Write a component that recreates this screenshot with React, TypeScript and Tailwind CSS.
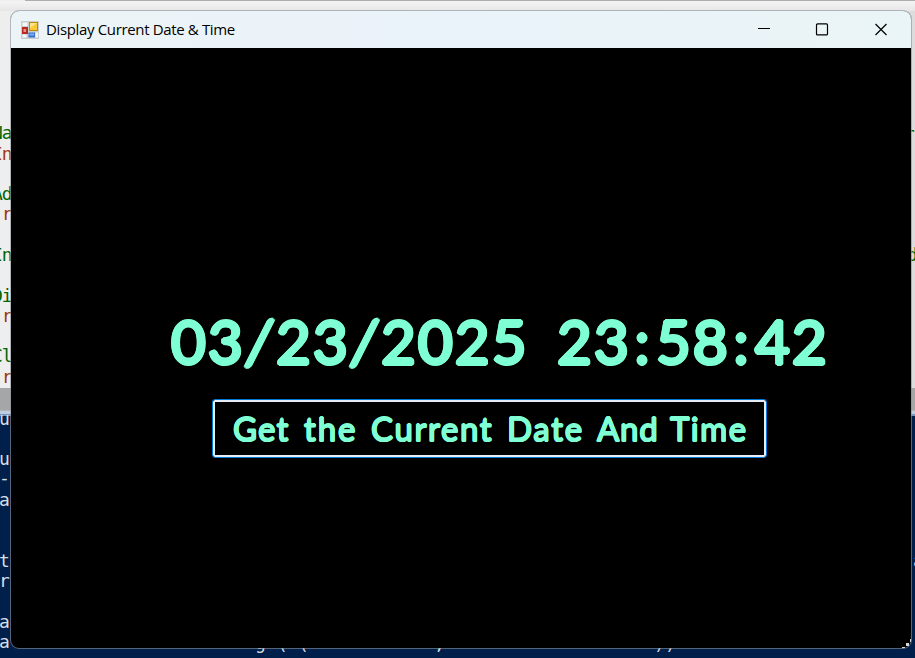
const glow = "[text-shadow:1.8px_0_#7fffd4,-1.8px_0_#7fffd4,0_1.8px_#7fffd4,0_-1.8px_#7fffd4,1.3px_1.3px_#7fffd4,-1.3px_1.3px_#7fffd4,1.3px_-1.3px_#7fffd4,-1.3px_-1.3px_#7fffd4]";
const glowSmall = "[text-shadow:0.7px_0_#7fffd4,-0.7px_0_#7fffd4,0_0.7px_#7fffd4,0_-0.7px_#7fffd4,0.5px_0.5px_#7fffd4,-0.5px_0.5px_#7fffd4,0.5px_-0.5px_#7fffd4,-0.5px_-0.5px_#7fffd4]";

const editorLines = [
  { t: "Na", c: "text-[#006400]", y: 123 },
  { t: "In", c: "text-[#a0360c]", y: 144 },
  { t: "Ad", c: "text-[#006400]", y: 184 },
  { t: " r", c: "text-[#a0360c]", y: 204 },
  { t: "In", c: "text-[#006400]", y: 245 },
  { t: "Di", c: "text-[#006400]", y: 286 },
  { t: " r", c: "text-[#a0360c]", y: 306 },
  { t: "Cl", c: "text-[#006400]", y: 346 },
  { t: " r", c: "text-[#a0360c]", y: 367 },
];
const consoleLines = [
  { t: "u", y: 409 }, { t: "u", y: 449 }, { t: "-", y: 468 }, { t: "a", y: 490 },
  { t: "t", y: 551 }, { t: "r", y: 571 }, { t: "a", y: 612 }, { t: "a", y: 632 },
];
const bottomPieces = [
  { t: "g", x: 255, y: 633 }, { t: "(", x: 277, y: 634 }, { t: "(", x: 298, y: 634 },
  { t: ",", x: 434, y: 634 }, { t: ")", x: 654, y: 634 }, { t: ")", x: 665, y: 634 },
];

function Backdrop() {
  return (
    <div className="absolute inset-0 flex flex-col overflow-hidden font-['DejaVu_Sans_Mono',monospace] text-[18px] leading-5">
      <div className="h-[388px] shrink-0 bg-linear-to-r from-[#eeeeee] via-[#f0f0f0] to-[#dcdcdc]">
        <div className="ml-[25px] h-px bg-[#adadad]" />
        <div className="h-[10px] bg-linear-to-b from-[#f4f4f4] to-[#e6e6e6]" />
      </div>
      <div className="h-[23px] shrink-0 border-b border-[#b3b3b3] bg-[#a6a6a6]" />
      <div className="h-[5px] shrink-0 border-b-2 border-[#7896bd] bg-[#bdcde0]" />
      <div className="grow bg-[#011f4b]" />
      {editorLines.map((l) => (
        <span key={l.y} className={`absolute -left-2 whitespace-pre tracking-[-1px] ${l.c}`} style={{ top: l.y }}>{l.t}</span>
      ))}
      {consoleLines.map((l) => (
        <span key={l.y} className="absolute -left-px text-[#d7dde2]" style={{ top: l.y }}>{l.t}</span>
      ))}
      {bottomPieces.map((l) => (
        <span key={l.x} className="absolute text-[#d7dde2]" style={{ left: l.x, top: l.y }}>{l.t}</span>
      ))}
      <span className="absolute left-[904px] top-[124px] text-[#006400]">r</span>
      <span className="absolute left-[907px] top-[245px] text-[#006400]">d</span>
      <span className="absolute left-[913px] top-[551px] text-[#b9dcea]">a</span>
    </div>
  );
}

function FormIcon() {
  return (
    <svg width="18" height="18" viewBox="0 0 18 18">
      <rect width="18" height="18" fill="#c8cdd0" />
      <rect x="1.5" y="1.5" width="5" height="3.5" fill="#f4f7f8" />
      <rect x="1.5" y="13.5" width="4" height="3" fill="#f4f7f8" />
      <rect x="14.5" y="11.5" width="2.5" height="5" fill="#f4f7f8" />
      <rect x="1" y="6" width="6" height="7" fill="#b52c25" />
      <rect x="2.5" y="8" width="2.5" height="3" fill="#ec9384" />
      <rect x="8" y="1" width="9" height="9" fill="#c18a06" />
      <rect x="9" y="2" width="7" height="7" fill="#fac936" />
      <path d="M9 2h7L9 7z" fill="#ffe388" />
      <rect x="7.5" y="11.5" width="6.5" height="5" fill="#3972d4" />
      <rect x="8.5" y="12.5" width="4.5" height="2" fill="#7dacf5" />
    </svg>
  );
}

function Slash() {
  return (
    <span className="flex w-[31px] justify-center">
      <span className="inline-block -skew-x-6">/</span>
    </span>
  );
}

export default function App() {
  return (
    <div className="relative h-[658px] w-[915px] overflow-hidden">
      <Backdrop />
      <div className="absolute left-[10px] top-[10px] flex h-[639px] w-[902px] flex-col overflow-hidden rounded-[9px] border border-[#8b939b]/60 bg-black bg-clip-padding">
        <header className="flex h-[37px] shrink-0 items-center bg-linear-to-r from-[#ecf4f7] via-[#eaf3f9] to-[#eaf5f7] pl-[10px]">
          <FormIcon />
          <span className="ml-[7px] whitespace-nowrap font-['Open_Sans',sans-serif] text-[15px] tracking-[-0.35px] text-black">Display Current Date &amp; Time</span>
          <svg className="ml-auto mr-[22px]" width="132" height="14" viewBox="0 0 132 14" fill="none" stroke="#000">
            <path d="M1 5.5h12" />
            <rect x="59.5" y="0.9" width="11" height="11" rx="1" strokeWidth="1.2" />
            <path d="M118.5 1l11 11m0-11l-11 11" strokeWidth="1.2" />
          </svg>
        </header>
        <main className="flex grow flex-col font-['Lato',sans-serif] text-[#7fffd4]">
          <div className={`mt-[253px] flex h-20 items-center whitespace-pre pl-[160px] text-[60px] font-normal leading-none tracking-[2.1px] ${glow}`}>
            <span className="w-[74px]">03</span>
            <Slash />
            <span className="w-[74px]">23</span>
            <Slash />
            <span className="w-[176px]">2025</span>
            <span className="w-[73px]">23</span>
            <span className="w-[26px] text-center">:</span>
            <span className="w-[73px]">58</span>
            <span className="w-[26px] text-center">:</span>
            <span>42</span>
          </div>
          <button className={`ml-[201px] mt-[18px] flex h-[59px] w-[555px] items-center rounded-[3px] border border-[#0078d7] bg-black pb-px pl-5 text-left text-[33px] font-normal leading-none shadow-[inset_0_0_0_2px_#e6edf7] ${glowSmall}`}>
            <span className="w-[71px] tracking-[1.2px]">Get</span>
            <span className="w-[67px] tracking-[1.9px]">the</span>
            <span className="w-[136px] tracking-[1.6px]">Current</span>
            <span className="w-[90px] tracking-[1.7px]">Date</span>
            <span className="w-[73px] tracking-[0.8px]">And</span>
            <span className="tracking-[1.4px]">Time</span>
          </button>
        </main>
      </div>
      <svg className="absolute left-[902px] top-[639px]" width="9" height="9" viewBox="0 0 9 9" fill="#d8d8d8">
        <path d="M8 0h1v3H8zM4 4h3v3H4zM0 8h3v1H0z" />
      </svg>
    </div>
  );
}
